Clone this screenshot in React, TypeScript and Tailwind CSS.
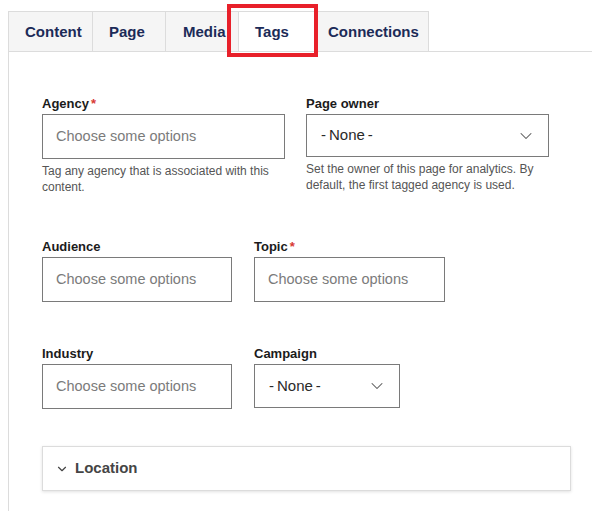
import { ChevronDown } from 'lucide-react';

const TABS = [
  { label: 'Content', w: 'w-[85px]', pl: 'pl-[16px]' },
  { label: 'Page', w: 'w-[73px]', pl: 'pl-[16px]' },
  { label: 'Media', w: 'w-[73px]', pl: 'pl-[17px]' },
  { label: 'Tags', w: 'w-[78px]', pl: 'pl-[16px]', active: true },
  { label: 'Connections', w: 'w-[112px]', pl: 'pl-[11px]' },
];

function Label({ text, required }: { text: string; required?: boolean }) {
  return (
    <div className="mb-[3px] h-[16px] pt-[1px] text-[13px] leading-[16px] font-bold text-[#1b1b1b]">
      {text}
      {required && <span className="ml-[2px] text-[#d83933]">*</span>}
    </div>
  );
}

function MultiInput({ w }: { w: string }) {
  return (
    <div className={`${w} flex h-[45px] items-center border border-[#7a7a7a] bg-white pl-[13px] text-[14.5px] text-[#7b7b7b]`}>
      Choose some options
    </div>
  );
}

function Select({ w, h }: { w: string; h: string }) {
  return (
    <div className={`${w} ${h} flex items-center justify-between border border-[#7a7a7a] bg-white pl-[14px] pr-[12px] text-[15px] text-[#2a2a2a]`}>
      <span>-&thinsp;None&thinsp;-</span>
      <ChevronDown className="h-[20px] w-[20px] text-[#555]" strokeWidth={1.25} />
    </div>
  );
}

function Help({ children }: { children: React.ReactNode }) {
  return <p className="mt-[4px] text-[12px] leading-[16px] text-[#555]">{children}</p>;
}

export default function App() {
  return (
    <div
      className="h-[511px] w-[592px] overflow-hidden bg-white pl-[8px] pt-[11px]"
      style={{ fontFamily: '"Liberation Sans", Arial, sans-serif' }}
    >
      <div className="relative w-[640px]">
        {/* tabs */}
        <div className="flex h-[41px] border-b border-[#dcdcdc]">
          {TABS.map((t) => (
            <div
              key={t.label}
              className={`${t.w} ${t.pl} flex items-center pt-[2px] border-t border-r border-[#dcdcdc] first:border-l text-[15px] font-bold text-[#1c2b58] ${
                t.active ? 'bg-white' : 'bg-[#f5f5f5]'
              }`}
            >
              {t.label}
            </div>
          ))}
        </div>

        {/* highlight on active tab */}
        <div className="pointer-events-none absolute left-[219px] top-[-7px] h-[53px] w-[91px] border-[4px] border-[#e8202a]" />

        {/* panel */}
        <div className="border-l border-[#dcdcdc] pl-[33px] pt-[43px] pb-[40px]">
          <div className="flex gap-[21px]">
            <div className="w-[243px]">
              <Label text="Agency" required />
              <MultiInput w="w-[243px]" />
              <Help>Tag any agency that is associated with this content.</Help>
            </div>
            <div className="w-[243px]">
              <Label text="Page owner" />
              <Select w="w-[243px]" h="h-[43px]" />
              <Help>Set the owner of this page for analytics. By default, the first tagged agency is used.</Help>
            </div>
          </div>

          <div className="mt-[43px] flex gap-[22px]">
            <div>
              <Label text="Audience" />
              <MultiInput w="w-[190px]" />
            </div>
            <div>
              <Label text="Topic" required />
              <MultiInput w="w-[191px]" />
            </div>
          </div>

          <div className="mt-[43px] flex gap-[22px]">
            <div>
              <Label text="Industry" />
              <MultiInput w="w-[190px]" />
            </div>
            <div>
              <Label text="Campaign" />
              <Select w="w-[146px]" h="h-[44px]" />
            </div>
          </div>

          <div className="mt-[37px] flex h-[45px] w-[529px] items-center border border-[#dcdcdc] bg-white pl-[12px] shadow-[0_1px_3px_rgba(0,0,0,0.12)]">
            <ChevronDown className="h-[14px] w-[14px] text-[#444]" strokeWidth={2} />
            <span className="ml-[6px] text-[15px] font-bold text-[#454545]">Location</span>
          </div>
        </div>
      </div>
    </div>
  );
}
